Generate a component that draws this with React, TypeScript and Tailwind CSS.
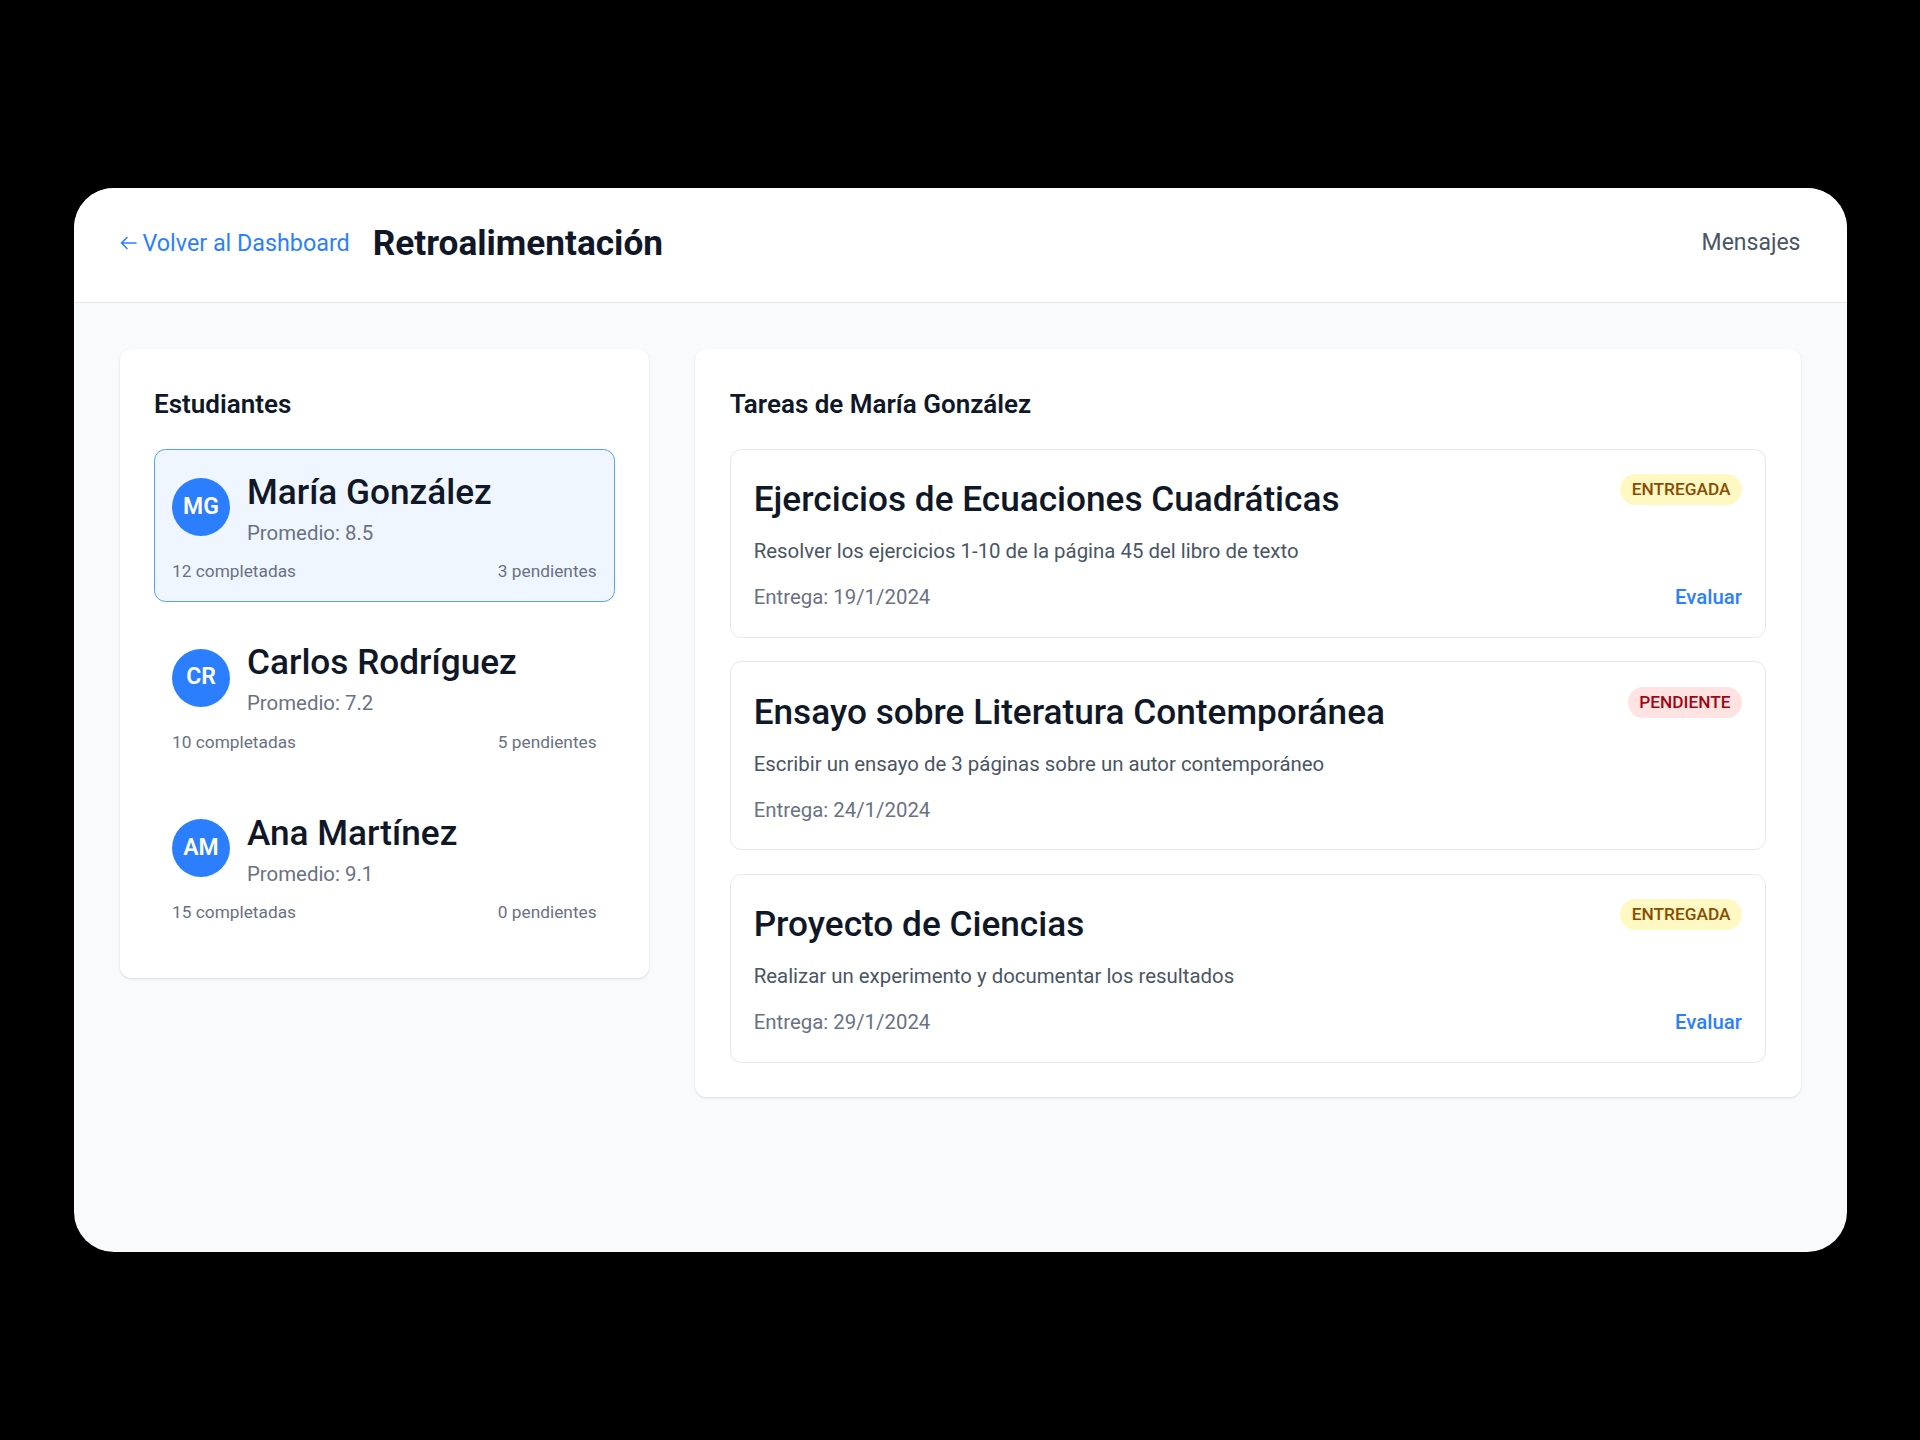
import React, { useState } from 'react';

interface Student {
  id: number;
  initials: string;
  name: string;
  average: number;
  completed: number;
  pending: number;
}

interface Task {
  id: number;
  title: string;
  description: string;
  dueDate: string;
  status: 'entregada' | 'pendiente';
}

const students: Student[] = [
  { id: 1, initials: 'MG', name: 'María González', average: 8.5, completed: 12, pending: 3 },
  { id: 2, initials: 'CR', name: 'Carlos Rodríguez', average: 7.2, completed: 10, pending: 5 },
  { id: 3, initials: 'AM', name: 'Ana Martínez', average: 9.1, completed: 15, pending: 0 },
];

const tasks: Task[] = [
  {
    id: 1,
    title: 'Ejercicios de Ecuaciones Cuadráticas',
    description: 'Resolver los ejercicios 1-10 de la página 45 del libro de texto',
    dueDate: '19/1/2024',
    status: 'entregada',
  },
  {
    id: 2,
    title: 'Ensayo sobre Literatura Contemporánea',
    description: 'Escribir un ensayo de 3 páginas sobre un autor contemporáneo',
    dueDate: '24/1/2024',
    status: 'pendiente',
  },
  {
    id: 3,
    title: 'Proyecto de Ciencias',
    description: 'Realizar un experimento y documentar los resultados',
    dueDate: '29/1/2024',
    status: 'entregada',
  },
];

const StatusBadge: React.FC<{ status: Task['status'] }> = ({ status }) => {
  const styles =
    status === 'entregada' ? 'bg-yellow-100 text-yellow-800' : 'bg-red-100 text-red-800';
  return (
    <span className={`px-[11.5px] py-[4px] rounded-full text-[17.3px] leading-[23px] font-medium ${styles}`}>
      {status === 'entregada' ? 'ENTREGADA' : 'PENDIENTE'}
    </span>
  );
};

const App: React.FC = () => {
  const [selectedId, setSelectedId] = useState<number>(1);
  const selected = students.find((s) => s.id === selectedId) ?? students[0];

  return (
    <div className="min-h-screen w-full bg-black flex items-center justify-center font-['Roboto',sans-serif]">
      <div className="w-[1773px] h-[1064px] bg-gray-50 rounded-[40px] overflow-hidden">
        {/* Header */}
        <header className="bg-white border-b border-gray-200 px-[46px] pt-[32px] pb-[36px] flex items-center justify-between">
          <div className="flex items-center gap-[23px]">
            <button className="flex items-center gap-[6px] text-[23.3px] leading-[34px] text-blue-500">
              <svg width="17" height="14" viewBox="0 0 17 14" fill="none" stroke="currentColor" strokeWidth="1.6" strokeLinecap="round" strokeLinejoin="round">
                <path d="M16 7H1.5M7 1.5L1.5 7L7 12.5" />
              </svg>
              <span>Volver al Dashboard</span>
            </button>
            <h1 className="text-[35.2px] leading-[46px] font-bold text-gray-900">Retroalimentación</h1>
          </div>
          <button className="text-[23px] leading-[34px] text-gray-600">Mensajes</button>
        </header>

        <main className="p-[46px] grid grid-cols-3 gap-[46px] items-start">
          {/* Students */}
          <section className="col-span-1 bg-white rounded-[11.5px] shadow-sm p-[34.5px]">
            <h2 className="text-[26px] leading-[40px] font-semibold text-gray-900 mb-[25px]">Estudiantes</h2>
            <div className="flex flex-col gap-[17px]">
              {students.map((student) => {
                const isActive = student.id === selectedId;
                return (
                  <div
                    key={student.id}
                    onClick={() => setSelectedId(student.id)}
                    className={`px-[17px] pt-[17px] pb-[18px] rounded-[11.5px] border cursor-pointer ${
                      isActive ? 'border-blue-400 bg-blue-50' : 'border-transparent'
                    }`}
                  >
                    <div className="flex items-center gap-[17px]">
                      <div className="w-[58px] h-[58px] rounded-full bg-blue-500 flex items-center justify-center text-white text-[23px] font-semibold shrink-0">
                        {student.initials}
                      </div>
                      <div>
                        <h3 className="text-[35.2px] leading-[51px] font-medium text-gray-900">{student.name}</h3>
                        <p className="mt-[1px] text-[20.4px] leading-[29px] text-gray-500">Promedio: {student.average}</p>
                      </div>
                    </div>
                    <div className="mt-[12.5px] flex justify-between text-[17.3px] leading-[23px] text-gray-500">
                      <span>{student.completed} completadas</span>
                      <span>{student.pending} pendientes</span>
                    </div>
                  </div>
                );
              })}
            </div>
          </section>

          {/* Tasks */}
          <section className="col-span-2 bg-white rounded-[11.5px] shadow-sm p-[34.5px]">
            <h2 className="text-[26px] leading-[40px] font-semibold text-gray-900 mb-[25px]">
              Tareas de {selected.name}
            </h2>
            <div className="flex flex-col gap-[23.5px]">
              {tasks.map((task) => (
                <div key={task.id} className="border border-gray-200 rounded-[11.5px] px-[23px] pt-[24.5px] pb-[24.5px]">
                  <div className="flex justify-between items-start">
                    <h3 className="text-[35.2px] leading-[51px] font-medium text-gray-900">{task.title}</h3>
                    <StatusBadge status={task.status} />
                  </div>
                  <p className="mt-[12px] text-[20.4px] leading-[29px] text-gray-600">{task.description}</p>
                  <div className="mt-[17px] flex justify-between items-center text-[20.4px] leading-[29px]">
                    <span className="text-gray-500">Entrega: {task.dueDate}</span>
                    {task.status === 'entregada' && (
                      <button className="text-blue-500 font-medium">Evaluar</button>
                    )}
                  </div>
                </div>
              ))}
            </div>
          </section>
        </main>
      </div>
    </div>
  );
};

export default App;
